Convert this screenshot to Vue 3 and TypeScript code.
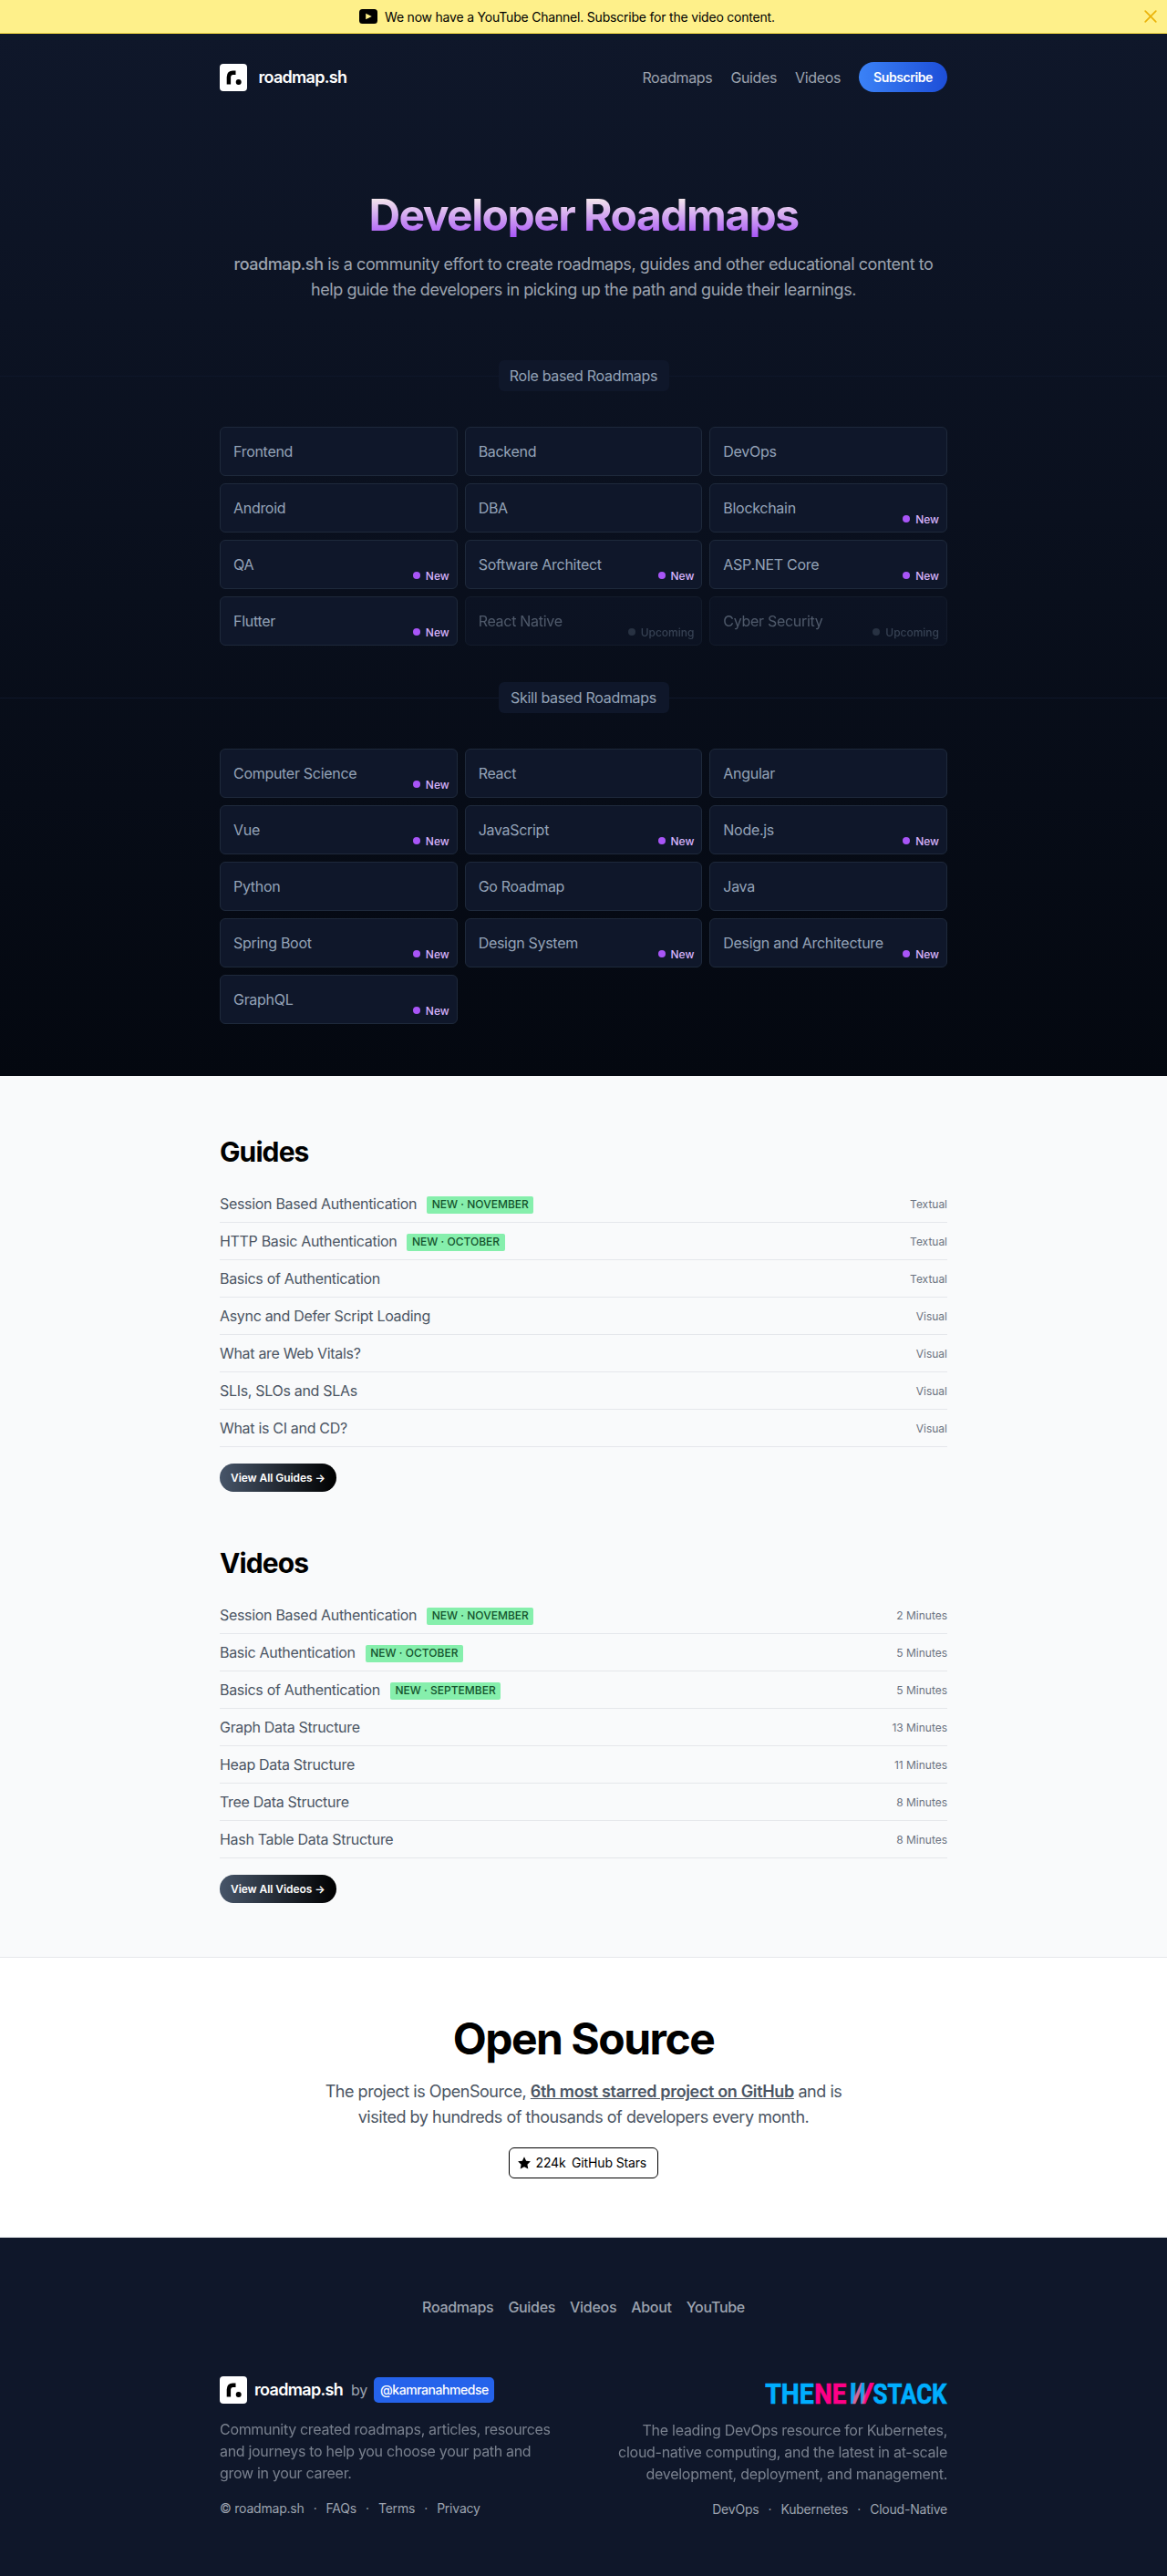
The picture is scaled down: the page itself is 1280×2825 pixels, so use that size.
<script setup lang="ts">
interface Roadmap {
  title: string
  state?: 'new' | 'upcoming'
}
interface Entry {
  title: string
  badge?: string
  meta: string
}

const groups: { label: string; items: Roadmap[] }[] = [
  {
    label: 'Role based Roadmaps',
    items: [
      { title: 'Frontend' },
      { title: 'Backend' },
      { title: 'DevOps' },
      { title: 'Android' },
      { title: 'DBA' },
      { title: 'Blockchain', state: 'new' },
      { title: 'QA', state: 'new' },
      { title: 'Software Architect', state: 'new' },
      { title: 'ASP.NET Core', state: 'new' },
      { title: 'Flutter', state: 'new' },
      { title: 'React Native', state: 'upcoming' },
      { title: 'Cyber Security', state: 'upcoming' },
    ],
  },
  {
    label: 'Skill based Roadmaps',
    items: [
      { title: 'Computer Science', state: 'new' },
      { title: 'React' },
      { title: 'Angular' },
      { title: 'Vue', state: 'new' },
      { title: 'JavaScript', state: 'new' },
      { title: 'Node.js', state: 'new' },
      { title: 'Python' },
      { title: 'Go Roadmap' },
      { title: 'Java' },
      { title: 'Spring Boot', state: 'new' },
      { title: 'Design System', state: 'new' },
      { title: 'Design and Architecture', state: 'new' },
      { title: 'GraphQL', state: 'new' },
    ],
  },
]

const lists: { heading: string; more: string; entries: Entry[] }[] = [
  {
    heading: 'Guides',
    more: 'View All Guides →',
    entries: [
      { title: 'Session Based Authentication', badge: 'New · November', meta: 'Textual' },
      { title: 'HTTP Basic Authentication', badge: 'New · October', meta: 'Textual' },
      { title: 'Basics of Authentication', meta: 'Textual' },
      { title: 'Async and Defer Script Loading', meta: 'Visual' },
      { title: 'What are Web Vitals?', meta: 'Visual' },
      { title: 'SLIs, SLOs and SLAs', meta: 'Visual' },
      { title: 'What is CI and CD?', meta: 'Visual' },
    ],
  },
  {
    heading: 'Videos',
    more: 'View All Videos →',
    entries: [
      { title: 'Session Based Authentication', badge: 'New · November', meta: '2 Minutes' },
      { title: 'Basic Authentication', badge: 'New · October', meta: '5 Minutes' },
      { title: 'Basics of Authentication', badge: 'New · September', meta: '5 Minutes' },
      { title: 'Graph Data Structure', meta: '13 Minutes' },
      { title: 'Heap Data Structure', meta: '11 Minutes' },
      { title: 'Tree Data Structure', meta: '8 Minutes' },
      { title: 'Hash Table Data Structure', meta: '8 Minutes' },
    ],
  },
]

const footerNav: string[] = ['Roadmaps', 'Guides', 'Videos', 'About', 'YouTube']
</script>

<template>
  <div class="page">
    <div class="banner">
      <svg class="yt" viewBox="0 0 20 16" width="20" height="16">
        <rect width="20" height="16" rx="3.5" fill="#000" />
        <path d="M7.2 4.8v6.4L13.8 8z" fill="#fef08a" />
      </svg>
      <span>We now have a YouTube Channel. Subscribe for the video content.</span>
      <svg class="close" viewBox="0 0 14 14" width="14" height="14">
        <path d="M1.2 1.2l11.6 11.6M12.8 1.2L1.2 12.8" stroke="#eab308" stroke-width="1.7" fill="none" stroke-linecap="round" />
      </svg>
    </div>

    <div class="hero">
      <div class="container">
        <header class="header">
          <a class="brand">
            <svg viewBox="0 0 30 30" width="30" height="30">
              <rect width="30" height="30" rx="4" fill="#fff" />
              <path d="M9.9 22.5v-8.1c0-3.3 1.6-4.7 4.4-4.7h3.2" stroke="#000" stroke-width="4.4" fill="none" />
              <circle cx="20.7" cy="20" r="3" fill="#000" />
            </svg>
            <span>roadmap.sh</span>
          </a>
          <nav class="nav">
            <a>Roadmaps</a>
            <a>Guides</a>
            <a>Videos</a>
            <a class="subscribe">Subscribe</a>
          </nav>
        </header>
        <h1 class="title">Developer Roadmaps</h1>
        <p class="lead">
          <b>roadmap.sh</b> is a community effort to create roadmaps, guides and other educational content to<br />
          help guide the developers in picking up the path and guide their learnings.
        </p>
      </div>
      <section v-for="g in groups" :key="g.label" class="group">
        <div class="divider"><span>{{ g.label }}</span></div>
        <div class="container grid">
          <a v-for="r in g.items" :key="r.title" class="card" :class="r.state">
            {{ r.title }}
            <span v-if="r.state" class="state"><i></i>{{ r.state === 'new' ? 'New' : 'Upcoming' }}</span>
          </a>
        </div>
      </section>
    </div>

    <div class="lists">
      <section v-for="l in lists" :key="l.heading" class="container list">
        <h2>{{ l.heading }}</h2>
        <a v-for="e in l.entries" :key="e.title" class="row">
          <span class="name">{{ e.title }}</span>
          <span v-if="e.badge" class="badge">{{ e.badge }}</span>
          <span class="meta">{{ e.meta }}</span>
        </a>
        <a class="more">{{ l.more }}</a>
      </section>
    </div>

    <section class="oss">
      <h2>Open Source</h2>
      <p>
        The project is OpenSource, <a>6th most starred project on GitHub</a> and is<br />
        visited by hundreds of thousands of developers every month.
      </p>
      <a class="stars">
        <svg viewBox="0 0 14 14" width="14" height="14">
          <path d="M7 .2l2.1 4.5 4.8.6-3.5 3.4.9 4.9L7 11.2l-4.3 2.4.9-4.9L.1 5.3l4.8-.6z" fill="#000" />
        </svg>
        <span class="count">224k</span><span>GitHub Stars</span>
      </a>
    </section>

    <footer class="footer">
      <div class="container">
        <nav class="fnav"><a v-for="n in footerNav" :key="n">{{ n }}</a></nav>
        <div class="cols">
          <div class="left">
            <div class="by">
              <svg viewBox="0 0 30 30" width="30" height="30">
                <rect width="30" height="30" rx="4" fill="#fff" />
                <path d="M9.9 22.5v-8.1c0-3.3 1.6-4.7 4.4-4.7h3.2" stroke="#000" stroke-width="4.4" fill="none" />
                <circle cx="20.7" cy="20" r="3" fill="#000" />
              </svg>
              <span class="fbrand">roadmap.sh</span>
              <span class="byword">by</span>
              <a class="handle">@kamranahmedse</a>
            </div>
            <p>Community created roadmaps, articles, resources<br />and journeys to help you choose your path and<br />grow in your career.</p>
            <div class="links"><a>© roadmap.sh</a><i>·</i><a>FAQs</a><i>·</i><a>Terms</a><i>·</i><a>Privacy</a></div>
          </div>
          <div class="right">
            <svg class="tns" viewBox="0 -8 200 41" width="200" height="41">
              <defs>
                <linearGradient id="w" x1="0" x2="1" y1="0" y2="0">
                  <stop offset="0" stop-color="#0aa8f5" />
                  <stop offset=".24" stop-color="#0aa8f5" />
                  <stop offset=".3" stop-color="#d0689c" />
                  <stop offset=".46" stop-color="#d0689c" />
                  <stop offset=".5" stop-color="#0aa8f5" />
                  <stop offset=".64" stop-color="#2a9fe6" />
                  <stop offset=".7" stop-color="#d0689c" />
                  <stop offset=".8" stop-color="#ff0087" />
                  <stop offset="1" stop-color="#ff0087" />
                </linearGradient>
              </defs>
              <g font-family="Roboto, sans-serif" font-weight="700" font-size="32" letter-spacing="0" stroke-width=".7">
                <text x="0.3" y="23.7" fill="#00aeff" stroke="#00aeff" textLength="53.5" lengthAdjust="spacingAndGlyphs">THE</text>
                <text x="54.3" y="23.7" fill="#ff0087" stroke="#ff0087" textLength="35" lengthAdjust="spacingAndGlyphs">NE</text>
                <text transform="translate(89.4 23.7) skewX(-12)" fill="url(#w)" stroke="url(#w)" textLength="25.5" lengthAdjust="spacingAndGlyphs">W</text>
                <text x="118.5" y="23.7" fill="#00aeff" stroke="#00aeff" textLength="81" lengthAdjust="spacingAndGlyphs">STACK</text>
              </g>
            </svg>
            <p>The leading DevOps resource for Kubernetes,<br />cloud-native computing, and the latest in at-scale<br />development, deployment, and management.</p>
            <div class="links"><a>DevOps</a><i>·</i><a>Kubernetes</a><i>·</i><a>Cloud-Native</a></div>
          </div>
        </div>
      </div>
    </footer>
  </div>
</template>

<style>
body {
  background: #fff;
}
</style>

<style scoped>
.page {
  font-family: Inter, 'Liberation Sans', sans-serif;
  font-size: 16px;
  line-height: 24px;
  letter-spacing: -0.0195em;
  color: #000;
}
.page * {
  box-sizing: border-box;
}
svg {
  display: block;
  flex: none;
}
i {
  font-style: normal;
}
h1,
h2,
p {
  margin: 0;
}
.container {
  width: 798px;
  margin: 0 auto;
}

/* Announcement bar */
.banner {
  position: relative;
  box-sizing: border-box;
  height: 37px;
  display: flex;
  align-items: center;
  gap: 8px;
  padding-left: 394px;
  background: #fef08a;
  border-bottom: 1px solid #fde047;
  font-size: 14px;
  line-height: 20px;
  letter-spacing: -0.0147em;
}
.banner span {
  padding-top: 1px;
}
.banner .close {
  position: absolute;
  right: 11px;
  top: 11px;
}

/* Hero */
.hero {
  height: 1143px;
  background: linear-gradient(to bottom, #0f172a, #040810);
}
.header {
  display: flex;
  justify-content: space-between;
  align-items: center;
  padding-top: 31px;
}
.brand {
  display: flex;
  align-items: center;
  gap: 12.5px;
  color: #fff;
  font-size: 18px;
  font-weight: 600;
  letter-spacing: -0.04em;
}
.nav {
  display: flex;
  align-items: center;
  gap: 20px;
  color: #9ca3af;
  letter-spacing: -0.0225em;
}
.subscribe {
  height: 33px;
  width: 97px;
  display: flex;
  align-items: center;
  justify-content: center;
  border-radius: 17px;
  color: #fff;
  font-size: 14px;
  font-weight: 600;
  letter-spacing: -0.03em;
  background: linear-gradient(to right, #3b82f6, #1d4ed8);
}
.title {
  width: max-content;
  margin: 111px auto 0;
  font-size: 48px;
  line-height: 48px;
  font-weight: 700;
  letter-spacing: -0.032em;
  color: transparent;
  background: linear-gradient(to bottom, #fffbeb, #a855f7);
  -webkit-background-clip: text;
  background-clip: text;
}
.lead {
  margin-top: 16px;
  text-align: center;
  font-size: 18px;
  line-height: 28px;
  letter-spacing: -0.024em;
  color: #9ca3af;
}
.lead b {
  font-weight: 500;
}
.group {
  padding-top: 63px;
}
.group + .group {
  padding-top: 40px;
}
.divider {
  display: flex;
  align-items: center;
}
.divider::before,
.divider::after {
  content: '';
  flex: 1;
  height: 1px;
  background: #0f172a;
}
.divider span {
  width: 187px;
  padding: 5px 0;
  text-align: center;
  border-radius: 6px;
  color: #94a3b8;
  background: #0f172a;
}
.grid {
  display: grid;
  grid-template-columns: repeat(3, 1fr);
  gap: 8px;
  margin-top: 39px;
}
.card {
  position: relative;
  height: 54px;
  padding: 14px 14px;
  border: 1px solid #1e293b;
  border-radius: 6px;
  background: #0f172a;
  color: #94a3b8;
  letter-spacing: -0.0185em;
}
.card.upcoming {
  opacity: 0.5;
}
.state {
  position: absolute;
  right: 8px;
  bottom: 5px;
  display: flex;
  align-items: center;
  gap: 6px;
  font-size: 12px;
  line-height: 16px;
  font-weight: 500;
  letter-spacing: -0.002em;
  color: #d8b4fe;
}
.state i {
  width: 8px;
  height: 8px;
  margin-top: -2px;
  border-radius: 50%;
  background: #a855f7;
}
.upcoming .state {
  color: #64748b;
}
.upcoming .state i {
  background: #475569;
}

/* Guides and videos */
.lists {
  height: 966px;
  padding-top: 65px;
  background: #f9fafb;
  box-sizing: border-box;
}
.list h2 {
  font-size: 30px;
  line-height: 36px;
  font-weight: 700;
  letter-spacing: -0.03em;
  margin-bottom: 19px;
}
.list + .list {
  margin-top: 60px;
}
.row {
  display: flex;
  align-items: center;
  height: 41px;
  border-bottom: 1px solid #e5e7eb;
  color: #4b5563;
}
.badge {
  position: relative;
  top: 1px;
  margin-left: 11px;
  padding: 1.5px 5.5px;
  border-radius: 2px;
  background: #86efac;
  color: #14532d;
  font-size: 12px;
  line-height: 16px;
  font-weight: 500;
  letter-spacing: 0.002em;
  text-transform: uppercase;
}
.meta {
  margin-left: auto;
  padding-top: 1px;
  font-size: 12px;
  line-height: 16px;
  letter-spacing: -0.001em;
  color: #6b7280;
}
.more {
  display: flex;
  align-items: center;
  width: max-content;
  height: 31px;
  margin-top: 18px;
  padding: 0 12px;
  border-radius: 16px;
  color: #fff;
  font-size: 12px;
  font-weight: 600;
  letter-spacing: -0.006em;
  background: linear-gradient(to right, #475569, #000);
}

/* Open source */
.oss {
  box-sizing: border-box;
  height: 308px;
  padding-top: 65px;
  display: flex;
  flex-direction: column;
  align-items: center;
  text-align: center;
  border-top: 1px solid #e5e7eb;
  border-bottom: 1px solid #e5e7eb;
  background: #fff;
}
.oss h2 {
  font-size: 48px;
  line-height: 48px;
  font-weight: 700;
  letter-spacing: -0.031em;
}
.oss p {
  margin-top: 20px;
  font-size: 18px;
  line-height: 28px;
  letter-spacing: -0.0255em;
  color: #4b5563;
}
.oss p a {
  font-weight: 600;
  letter-spacing: -0.0195em;
  text-decoration: underline;
}
.stars {
  display: flex;
  align-items: center;
  width: 164px;
  height: 34px;
  margin-top: 19px;
  padding-left: 9px;
  border: 1px solid #000;
  border-radius: 6px;
  font-size: 14px;
  letter-spacing: -0.01em;
}
.stars .count {
  margin: 0 6.5px 0 5.5px;
}

/* Footer */
.footer {
  height: 371px;
  padding-top: 64px;
  box-sizing: border-box;
  background: #0f172a;
  color: #9ca3af;
}
.fnav {
  display: flex;
  justify-content: center;
  gap: 16px;
  font-weight: 500;
  letter-spacing: -0.019em;
}
.cols {
  display: flex;
  justify-content: space-between;
  margin-top: 64px;
}
.by {
  display: flex;
  align-items: center;
  height: 30px;
}
.fbrand {
  margin-left: 8px;
  color: #fff;
  font-size: 18px;
  font-weight: 600;
  letter-spacing: -0.038em;
}
.byword {
  margin: 0 7.5px 0 9px;
  letter-spacing: -0.02em;
}
.handle {
  width: 132px;
  height: 28px;
  line-height: 28px;
  text-align: center;
  border-radius: 5px;
  background: #2563eb;
  color: #fff;
  font-size: 14px;
  font-weight: 500;
  letter-spacing: -0.033em;
}
.cols p {
  margin-top: 16px;
  color: #9ca3af;
  opacity: 0.75;
}
.links {
  display: flex;
  margin-top: 17px;
  font-size: 14px;
  line-height: 20px;
  letter-spacing: -0.0155em;
}
.links i {
  width: 24px;
  text-align: center;
}
.right {
  text-align: right;
}
.right .tns {
  margin: -2px 0 -8px auto;
  overflow: visible;
}
.right p {
  letter-spacing: -0.017em;
}
.right .links {
  justify-content: flex-end;
}
</style>
